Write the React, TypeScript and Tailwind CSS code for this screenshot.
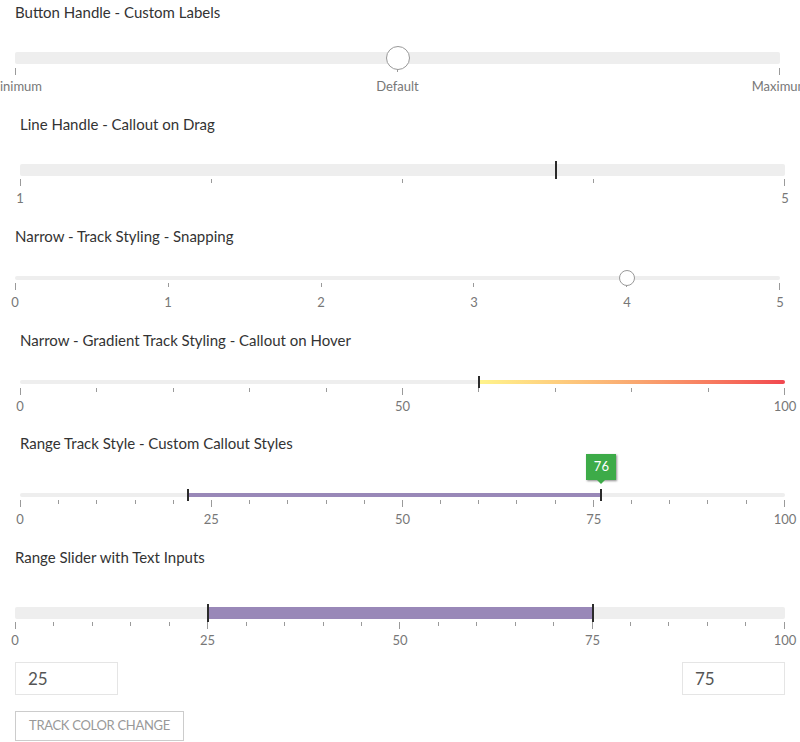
import React from "react";

type Tick = { major?: boolean };

interface SliderProps {
  areaClass: string;
  trackClass: string;
  tickRowClass: string;
  labelRowClass: string;
  ticks: Tick[];
  labels: string[];
  children?: React.ReactNode;
}

const font = { fontFamily: "Lato, 'Open Sans', sans-serif" };

function makeTicks(count: number, majorEvery: number): Tick[] {
  return Array.from({ length: count + 1 }, (_, i) => ({ major: i % majorEvery === 0 }));
}

// track with overlay handles, then an evenly spaced tick row and label row
function Slider({ areaClass, trackClass, tickRowClass, labelRowClass, ticks, labels, children }: SliderProps) {
  return (
    <div className={"flex flex-col " + areaClass}>
      <div className={"relative rounded-[2px] bg-[#eeeeee] " + trackClass}>{children}</div>
      <div className={"flex h-[7px] items-start justify-between " + tickRowClass}>
        {ticks.map((t, i) => (
          <div key={i} className={"w-px bg-[#9a9a9a] " + (t.major ? "h-[7px]" : "h-[4px]")} />
        ))}
      </div>
      <div className={"flex justify-between " + labelRowClass}>
        {labels.map((l) => (
          <div key={l} className="flex w-0 justify-center whitespace-nowrap text-[13px] leading-4 text-[#777]">
            {l}
          </div>
        ))}
      </div>
    </div>
  );
}

function Title({ children, indent }: { children: React.ReactNode; indent?: boolean }) {
  return (
    <div className={"h-6 text-[15px] leading-6 text-[#333] " + (indent ? "pl-5" : "pl-[15px]")}>{children}</div>
  );
}

export default function App() {
  return (
    <div className="h-[742px] w-[800px] overflow-hidden bg-white" style={font}>
      {/* Button handle */}
      <Title>Button Handle - Custom Labels</Title>
      <div className="pl-[15px]">
        <Slider
          areaClass="h-[88px] w-[765px] pt-[28px]"
          trackClass="h-3"
          tickRowClass="mt-1"
          labelRowClass="mt-[3px]"
          ticks={[{ major: true }, {}, { major: true }]}
          labels={["Minimum", "Default", "Maximum"]}
        >
          <div className="absolute left-1/2 top-[-6px] h-6 w-6 -translate-x-1/2 rounded-full border border-[#999] bg-white" />
        </Slider>
      </div>

      {/* Line handle */}
      <Title indent>Line Handle - Callout on Drag</Title>
      <div className="pl-5">
        <Slider
          areaClass="h-[88px] w-[765px] pt-[28px]"
          trackClass="h-3"
          tickRowClass="mt-[3px]"
          labelRowClass="mt-1"
          ticks={makeTicks(4, 4)}
          labels={["1", "5"]}
        >
          <div className="absolute left-[70%] top-[-3px] h-[18px] w-[2px] -translate-x-1/2 bg-[#2b2b2b]" />
        </Slider>
      </div>

      {/* Narrow snapping */}
      <Title>Narrow - Track Styling - Snapping</Title>
      <div className="pl-[15px]">
        <Slider
          areaClass="h-[80px] w-[765px] pt-[28px]"
          trackClass="h-1"
          tickRowClass="mt-[3px]"
          labelRowClass="mt-1"
          ticks={makeTicks(5, 5)}
          labels={["0", "1", "2", "3", "4", "5"]}
        >
          <div className="absolute left-[80%] top-[-6px] h-4 w-4 -translate-x-1/2 rounded-full border border-[#999] bg-white" />
        </Slider>
      </div>

      {/* Gradient */}
      <Title indent>Narrow - Gradient Track Styling - Callout on Hover</Title>
      <div className="pl-5">
        <Slider
          areaClass="h-[79px] w-[765px] pt-[28px]"
          trackClass="h-1"
          tickRowClass="mt-1"
          labelRowClass="mt-[3px]"
          ticks={makeTicks(10, 5)}
          labels={["0", "50", "100"]}
        >
          <div className="absolute inset-y-0 left-[60%] right-0 rounded-r-[2px] bg-gradient-to-r from-[#fff48c] via-[#f9a971] to-[#f1464f]" />
          <div className="absolute left-[60%] top-[-4px] h-3 w-[2px] -translate-x-1/2 bg-[#2b2b2b]" />
        </Slider>
      </div>

      {/* Range callout */}
      <Title indent>Range Track Style - Custom Callout Styles</Title>
      <div className="pl-5">
        <Slider
          areaClass="h-[90px] w-[765px] pt-[38px]"
          trackClass="h-1"
          tickRowClass="mt-[3px]"
          labelRowClass="mt-1"
          ticks={makeTicks(20, 5)}
          labels={["0", "25", "50", "75", "100"]}
        >
          <div className="absolute inset-y-0 left-[22%] right-[24%] bg-[#9988b8]" />
          <div className="absolute left-[22%] top-[-4px] h-3 w-[2px] -translate-x-1/2 bg-[#2b2b2b]" />
          <div className="absolute left-[76%] top-[-4px] h-3 w-[2px] -translate-x-1/2 bg-[#2b2b2b]" />
          <div className="absolute left-[76%] top-[-39px] flex h-[26px] w-[30px] -translate-x-1/2 items-center justify-center bg-[#3dab48] text-[13px] text-white shadow-[1px_1px_2px_rgba(0,0,0,0.45)]">
            76
            <div className="absolute -bottom-[4px] left-1/2 h-0 w-0 -translate-x-1/2 border-x-[4px] border-t-[4px] border-x-transparent border-t-[#3dab48]" />
          </div>
        </Slider>
      </div>

      {/* Range with inputs */}
      <Title>Range Slider with Text Inputs</Title>
      <div className="pl-[15px]">
        <Slider
          areaClass="h-[85px] w-[770px] pt-[38px]"
          trackClass="h-3"
          tickRowClass="mt-[3px]"
          labelRowClass="mt-[3px]"
          ticks={makeTicks(20, 5)}
          labels={["0", "25", "50", "75", "100"]}
        >
          <div className="absolute inset-y-0 left-[25%] right-[25%] bg-[#9988b8]" />
          <div className="absolute left-[25%] top-[-3px] h-[18px] w-[2px] -translate-x-1/2 bg-[#2b2b2b]" />
          <div className="absolute left-[75%] top-[-3px] h-[18px] w-[2px] -translate-x-1/2 bg-[#2b2b2b]" />
        </Slider>
        <div className="mt-2 flex w-[770px] justify-between">
          <div className="flex h-[33px] w-[103px] items-center border border-[#e5e5e5] pl-3 text-[17px] text-[#555]">25</div>
          <div className="flex h-[33px] w-[103px] items-center border border-[#e5e5e5] pl-3 text-[17px] text-[#555]">75</div>
        </div>
        <button
          type="button"
          className="mt-4 flex h-[30px] w-[169px] items-center justify-center border border-[#cccccc] text-[13px] uppercase tracking-[-0.3px] text-[#999]"
        >
          Track Color Change
        </button>
      </div>
    </div>
  );
}
